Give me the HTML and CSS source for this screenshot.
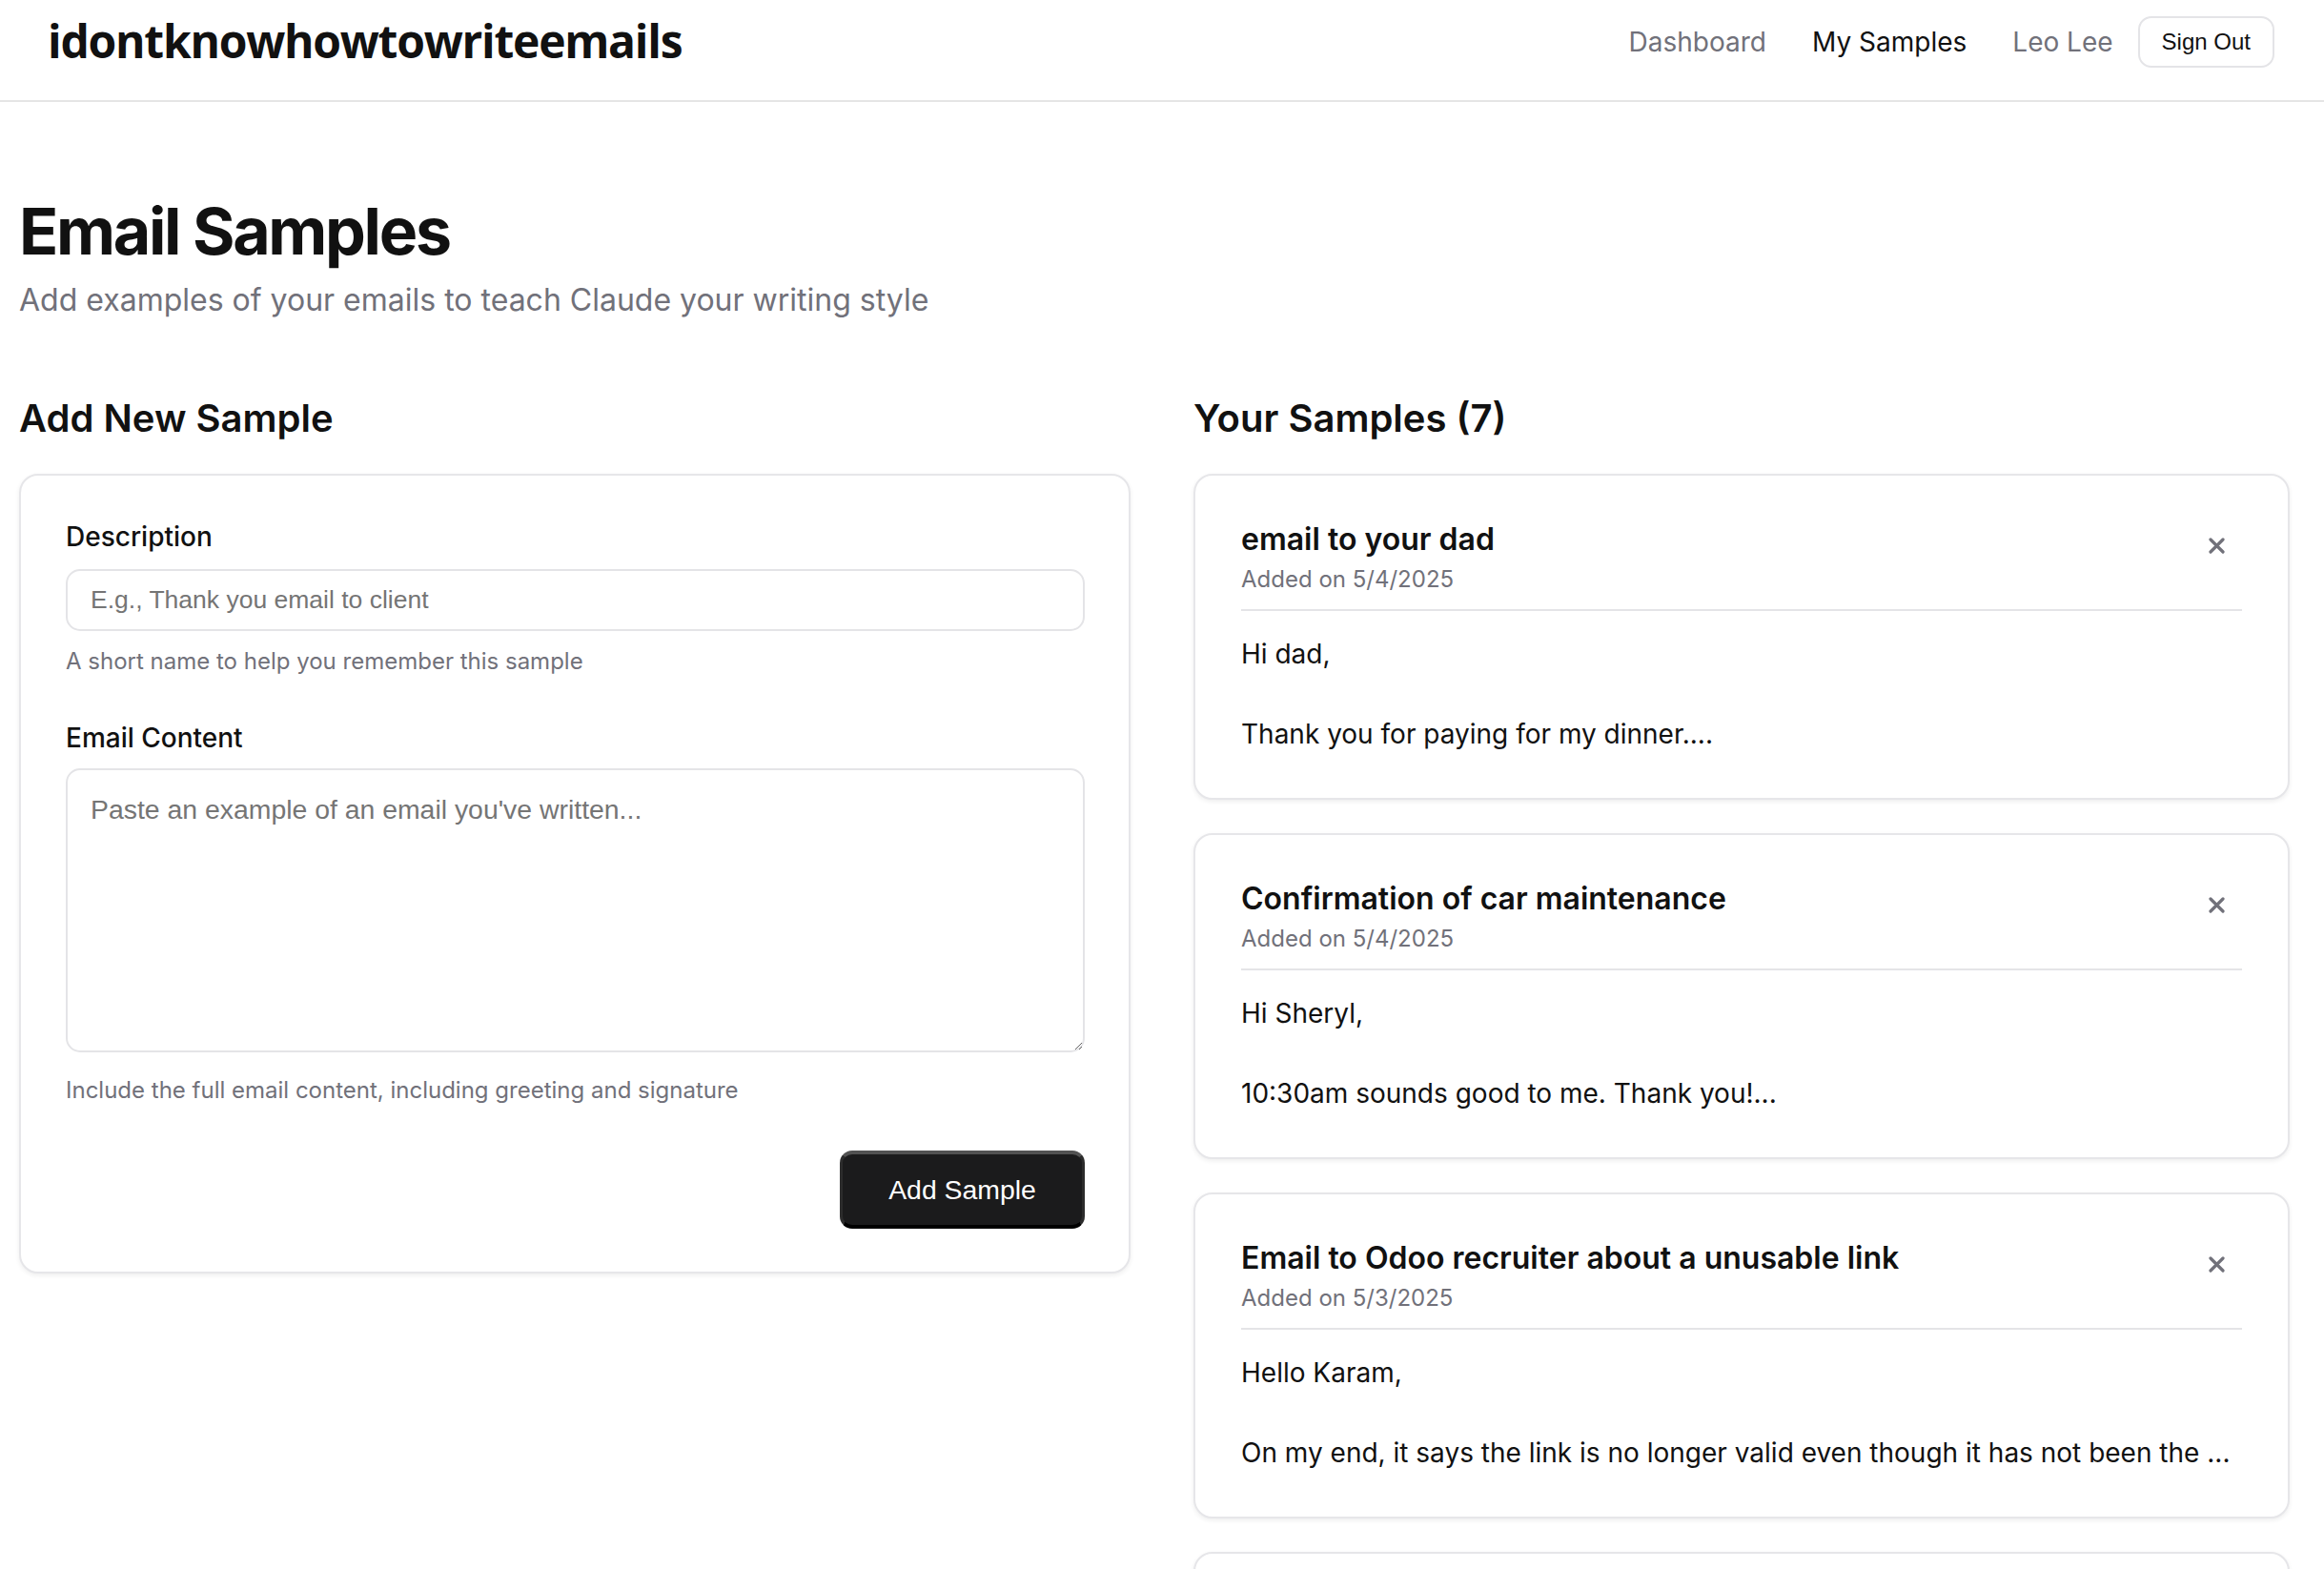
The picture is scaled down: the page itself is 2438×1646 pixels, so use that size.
FILE: index.html
```html
<!DOCTYPE html>
<html lang="en">
<head>
<meta charset="utf-8">
<title>Email Samples</title>
<link rel="stylesheet" href="styles.css">
</head>
<body>
<header class="topbar">
  <div class="brand">idontknowhowtowriteemails</div>
  <nav class="nav">
    <div class="nav-links">
      <a class="nav-link" href="#">Dashboard</a>
      <a class="nav-link active" href="#">My Samples</a>
    </div>
    <div class="user">
      <span class="nav-user">Leo Lee</span>
      <button class="btn-outline" type="button">Sign Out</button>
    </div>
  </nav>
</header>
<main class="page">
  <h1 class="page-title">Email Samples</h1>
  <p class="page-sub">Add examples of your emails to teach Claude your writing style</p>
  <div class="columns">
    <section>
      <h2 class="section-title">Add New Sample</h2>
      <form class="card form-card">
        <label class="field-label" for="desc">Description</label>
        <input class="field-input" id="desc" type="text" placeholder="E.g., Thank you email to client">
        <p class="field-hint">A short name to help you remember this sample</p>
        <label class="field-label second" for="content">Email Content</label>
        <textarea class="field-area" id="content" placeholder="Paste an example of an email you've written..."></textarea>
        <p class="field-hint hint-area">Include the full email content, including greeting and signature</p>
        <div class="actions">
          <button class="btn-primary" type="button">Add Sample</button>
        </div>
      </form>
    </section>
    <section>
      <h2 class="section-title">Your Samples (7)</h2>
      <div class="sample-list">
        <article class="card sample-card">
          <div class="sample-head">
            <div>
              <h3 class="sample-title">email to your dad</h3>
              <div class="sample-date">Added on 5/4/2025</div>
            </div>
            <button class="close-btn" type="button" aria-label="Delete"><svg viewBox="0 0 17 17" width="17" height="17"><path d="M2 2L15 15M15 2L2 15" stroke="#71717a" stroke-width="3.2" stroke-linecap="round" fill="none"/></svg></button>
          </div>
          <div class="sample-body">Hi dad,

Thank you for paying for my dinner....</div>
        </article>
        <article class="card sample-card">
          <div class="sample-head">
            <div>
              <h3 class="sample-title">Confirmation of car maintenance</h3>
              <div class="sample-date">Added on 5/4/2025</div>
            </div>
            <button class="close-btn" type="button" aria-label="Delete"><svg viewBox="0 0 17 17" width="17" height="17"><path d="M2 2L15 15M15 2L2 15" stroke="#71717a" stroke-width="3.2" stroke-linecap="round" fill="none"/></svg></button>
          </div>
          <div class="sample-body">Hi Sheryl,

10:30am sounds good to me. Thank you!...</div>
        </article>
        <article class="card sample-card">
          <div class="sample-head">
            <div>
              <h3 class="sample-title">Email to Odoo recruiter about a unusable link</h3>
              <div class="sample-date">Added on 5/3/2025</div>
            </div>
            <button class="close-btn" type="button" aria-label="Delete"><svg viewBox="0 0 17 17" width="17" height="17"><path d="M2 2L15 15M15 2L2 15" stroke="#71717a" stroke-width="3.2" stroke-linecap="round" fill="none"/></svg></button>
          </div>
          <div class="sample-body">Hello Karam,

On my end, it says the link is no longer valid even though it has not been the ...</div>
        </article>
        <article class="card sample-card">
          <div class="sample-head">
            <div>
              <h3 class="sample-title">Follow-up after the interview</h3>
              <div class="sample-date">Added on 5/2/2025</div>
            </div>
            <button class="close-btn" type="button" aria-label="Delete"><svg viewBox="0 0 17 17" width="17" height="17"><path d="M2 2L15 15M15 2L2 15" stroke="#71717a" stroke-width="3.2" stroke-linecap="round" fill="none"/></svg></button>
          </div>
          <div class="sample-body">Hi Anna,

Thank you for taking the time to meet with me today....</div>
        </article>
      </div>
    </section>
  </div>
</main>
</body>
</html>
```
FILE: styles.css
```css
* { box-sizing: border-box; }
html, body { margin: 0; padding: 0; }
body {
  font-family: Inter, "Liberation Sans", sans-serif;
  color: #111111;
  background: #ffffff;
}

/* Header */
.topbar {
  display: flex;
  justify-content: space-between;
  align-items: flex-start;
  height: 107px;
  padding: 0 52px 0 50px;
  border-bottom: 2px solid #e5e5e5;
}
.brand {
  margin-top: 15px;
  font-family: "Open Sans", "Noto Sans", sans-serif;
  font-weight: 700;
  font-size: 48px;
  line-height: 56px;
  letter-spacing: -1.25px;
  color: #111111;
}
.nav {
  margin-top: 17px;
  display: flex;
  align-items: center;
}
.nav-links {
  display: flex;
  align-items: center;
  gap: 48px;
}
.nav-link, .nav-user {
  font-size: 28px;
  line-height: 36px;
  color: #71717a;
  text-decoration: none;
}
.nav-link.active { color: #111111; }
.user {
  display: flex;
  align-items: center;
  gap: 26px;
  margin-left: 48px;
}
.btn-outline {
  height: 54px;
  padding: 0 23px;
  border: 2px solid #e4e4e7;
  border-radius: 14px;
  background: #ffffff;
  font-family: "Liberation Sans", Arial, sans-serif;
  font-size: 24px;
  color: #111111;
}

/* Page */
.page {
  padding: 97px 36px 0 20px;
}
.page-title {
  margin: 0;
  font-size: 68px;
  line-height: 76px;
  font-weight: 700;
  letter-spacing: -0.034em;
}
.page-sub {
  margin: 14px 0 0;
  font-size: 32px;
  line-height: 42px;
  color: #71717a;
}
.columns {
  display: grid;
  grid-template-columns: 1166px 1150px;
  gap: 66px;
  margin-top: 77px;
  align-items: start;
}
.section-title {
  margin: 0 0 32px;
  font-size: 40px;
  line-height: 52px;
  font-weight: 600;
}

/* Cards */
.card {
  background: #ffffff;
  border: 2px solid #e6e6e9;
  border-radius: 20px;
  box-shadow: 0 2px 5px rgba(0, 0, 0, 0.07);
}
.form-card {
  padding: 44px 46px 45px 47px;
}
.field-label {
  display: block;
  font-size: 28px;
  line-height: 40px;
  font-weight: 500;
}
.field-label.second { margin-top: 44px; }
.field-input {
  display: block;
  width: 100%;
  height: 65px;
  margin-top: 14px;
  padding: 0 24px;
  border: 2px solid #e4e4e7;
  border-radius: 15px;
  font-family: "Liberation Sans", Arial, sans-serif;
  font-size: 26.5px;
  color: #111111;
  background: #ffffff;
}
.field-area {
  display: block;
  width: 100%;
  height: 298px;
  margin-top: 12px;
  padding: 25px 24px;
  border: 2px solid #e4e4e7;
  border-radius: 15px;
  font-family: "Liberation Sans", Arial, sans-serif;
  font-size: 28.4px;
  color: #111111;
  background: #ffffff;
}
.field-input::placeholder, .field-area::placeholder { color: #757575; }
.field-hint {
  margin: 16px 0 0;
  font-size: 24px;
  line-height: 32px;
  color: #71717a;
}
.field-hint.hint-area { margin-top: 24px; }
.actions {
  display: flex;
  justify-content: flex-end;
  margin-top: 47px;
}
.btn-primary {
  width: 257px;
  height: 82px;
  border-style: solid;
  border-width: 4px 3px 4px 3px;
  border-color: #525252 #2c2c2c #000000 #2c2c2c;
  border-radius: 13px;
  background: #1b1b1c;
  color: #ffffff;
  font-family: "Liberation Sans", Arial, sans-serif;
  font-size: 28.4px;
}

/* Samples */
.sample-list {
  display: flex;
  flex-direction: column;
  gap: 35px;
}
.sample-card {
  padding: 47px 48px 46px 48px;
}
.sample-head {
  display: flex;
  justify-content: space-between;
  align-items: flex-start;
  padding-bottom: 15px;
  border-bottom: 2px solid #e4e4e7;
}
.sample-title {
  margin: 0;
  font-size: 32px;
  line-height: 40px;
  font-weight: 600;
}
.sample-date {
  margin-top: 6px;
  font-size: 24px;
  line-height: 32px;
  color: #71717a;
}
.close-btn {
  width: 54px;
  height: 54px;
  margin-top: -1px;
  padding: 0;
  border: 0;
  background: transparent;
  display: flex;
  align-items: center;
  justify-content: center;
}
.sample-body {
  margin-top: 24px;
  font-size: 28px;
  line-height: 42px;
  white-space: pre;
  overflow: hidden;
}
```
